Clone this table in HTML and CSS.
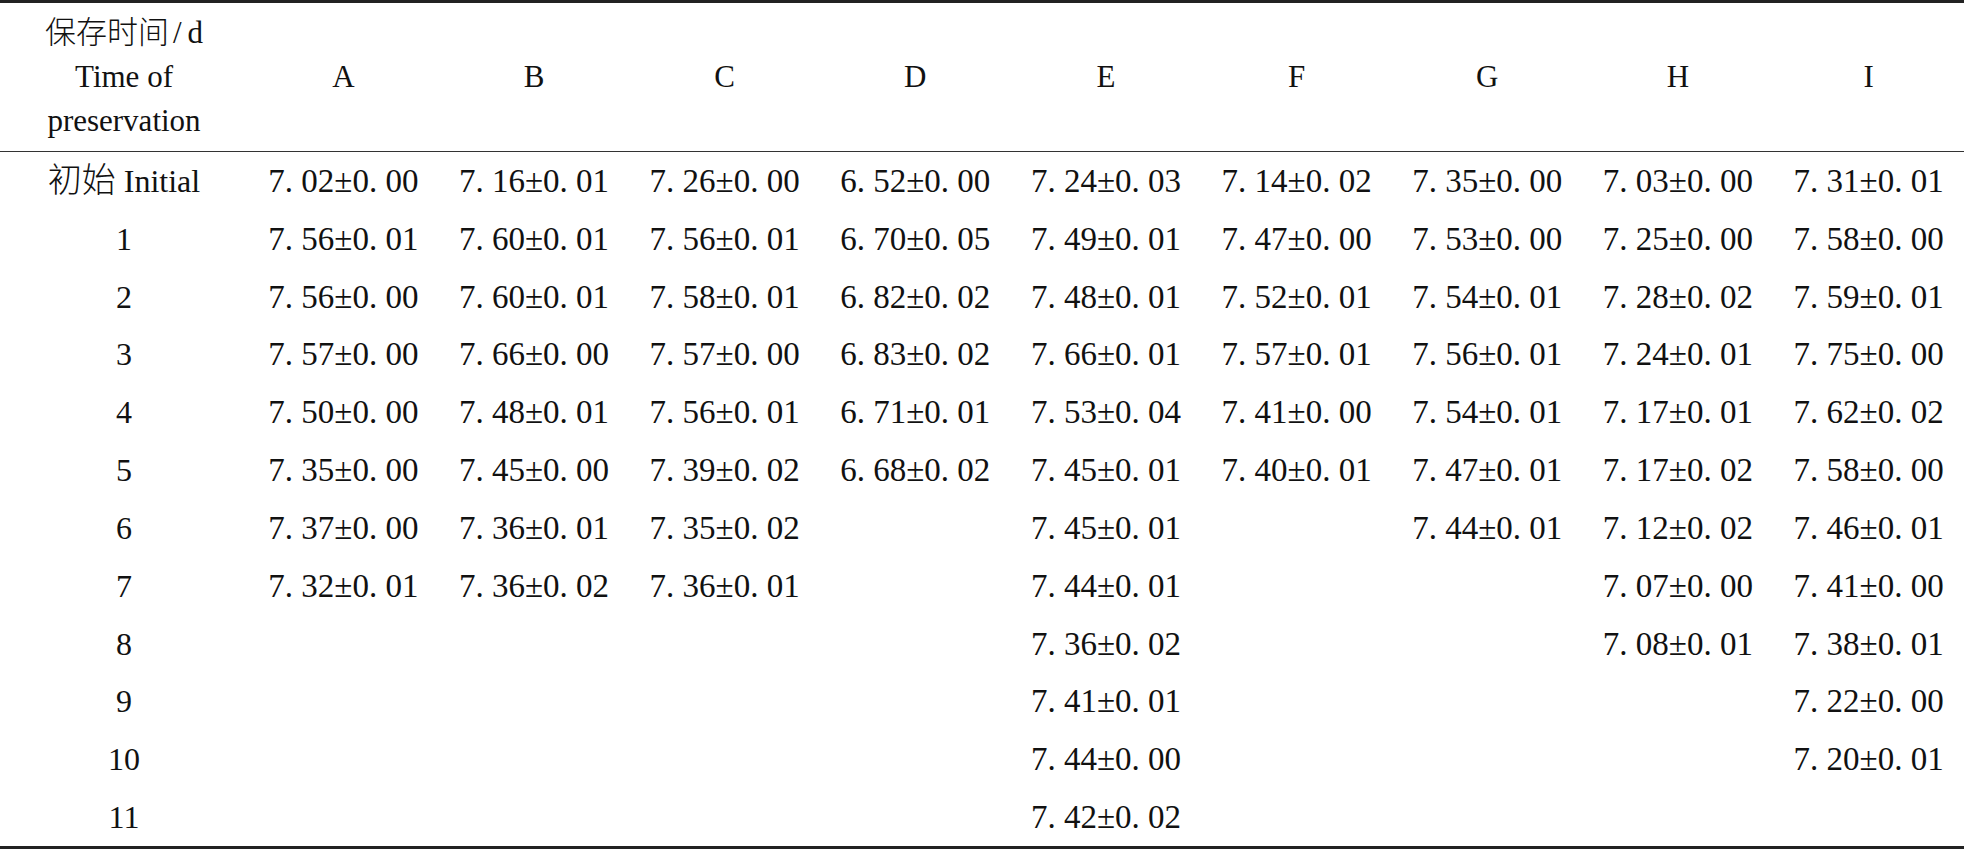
FILE: index.html
```html
<!DOCTYPE html>
<html lang="zh">
<head>
<meta charset="utf-8">
<link rel="stylesheet" href="styles.css">
</head>
<body>
<table class="data">
  <colgroup>
    <col class="c-first">
    <col class="c-val"><col class="c-val"><col class="c-val"><col class="c-val"><col class="c-val"><col class="c-val"><col class="c-val"><col class="c-val"><col class="c-val">
  </colgroup>
  <thead>
    <tr>
      <th class="hd-first"><span class="cjk">保存时间</span><span class="sl">/</span>d<br>Time of<br>preservation</th>
      <th>A</th><th>B</th><th>C</th><th>D</th><th>E</th><th>F</th><th>G</th><th>H</th><th>I</th>
    </tr>
  </thead>
  <tbody>
    <tr><td class="lbl"><span class="cjk-b">初始</span> Initial</td><td>7. 02±0. 00</td><td>7. 16±0. 01</td><td>7. 26±0. 00</td><td>6. 52±0. 00</td><td>7. 24±0. 03</td><td>7. 14±0. 02</td><td>7. 35±0. 00</td><td>7. 03±0. 00</td><td>7. 31±0. 01</td></tr>
    <tr><td class="lbl">1</td><td>7. 56±0. 01</td><td>7. 60±0. 01</td><td>7. 56±0. 01</td><td>6. 70±0. 05</td><td>7. 49±0. 01</td><td>7. 47±0. 00</td><td>7. 53±0. 00</td><td>7. 25±0. 00</td><td>7. 58±0. 00</td></tr>
    <tr><td class="lbl">2</td><td>7. 56±0. 00</td><td>7. 60±0. 01</td><td>7. 58±0. 01</td><td>6. 82±0. 02</td><td>7. 48±0. 01</td><td>7. 52±0. 01</td><td>7. 54±0. 01</td><td>7. 28±0. 02</td><td>7. 59±0. 01</td></tr>
    <tr><td class="lbl">3</td><td>7. 57±0. 00</td><td>7. 66±0. 00</td><td>7. 57±0. 00</td><td>6. 83±0. 02</td><td>7. 66±0. 01</td><td>7. 57±0. 01</td><td>7. 56±0. 01</td><td>7. 24±0. 01</td><td>7. 75±0. 00</td></tr>
    <tr><td class="lbl">4</td><td>7. 50±0. 00</td><td>7. 48±0. 01</td><td>7. 56±0. 01</td><td>6. 71±0. 01</td><td>7. 53±0. 04</td><td>7. 41±0. 00</td><td>7. 54±0. 01</td><td>7. 17±0. 01</td><td>7. 62±0. 02</td></tr>
    <tr><td class="lbl">5</td><td>7. 35±0. 00</td><td>7. 45±0. 00</td><td>7. 39±0. 02</td><td>6. 68±0. 02</td><td>7. 45±0. 01</td><td>7. 40±0. 01</td><td>7. 47±0. 01</td><td>7. 17±0. 02</td><td>7. 58±0. 00</td></tr>
    <tr><td class="lbl">6</td><td>7. 37±0. 00</td><td>7. 36±0. 01</td><td>7. 35±0. 02</td><td></td><td>7. 45±0. 01</td><td></td><td>7. 44±0. 01</td><td>7. 12±0. 02</td><td>7. 46±0. 01</td></tr>
    <tr><td class="lbl">7</td><td>7. 32±0. 01</td><td>7. 36±0. 02</td><td>7. 36±0. 01</td><td></td><td>7. 44±0. 01</td><td></td><td></td><td>7. 07±0. 00</td><td>7. 41±0. 00</td></tr>
    <tr><td class="lbl">8</td><td></td><td></td><td></td><td></td><td>7. 36±0. 02</td><td></td><td></td><td>7. 08±0. 01</td><td>7. 38±0. 01</td></tr>
    <tr><td class="lbl">9</td><td></td><td></td><td></td><td></td><td>7. 41±0. 01</td><td></td><td></td><td></td><td>7. 22±0. 00</td></tr>
    <tr><td class="lbl">10</td><td></td><td></td><td></td><td></td><td>7. 44±0. 00</td><td></td><td></td><td></td><td>7. 20±0. 01</td></tr>
    <tr><td class="lbl">11</td><td></td><td></td><td></td><td></td><td>7. 42±0. 02</td><td></td><td></td><td></td><td></td></tr>
  </tbody>
</table>
</body>
</html>
```
FILE: styles.css
```css
html, body {
  margin: 0;
  padding: 0;
  background: #ffffff;
}
body {
  font-family: "Liberation Serif", "Noto Sans CJK SC", serif;
  color: #111111;
}
.data {
  width: 1964px;
  border-collapse: collapse;
  table-layout: fixed;
  border-top: 3px solid #222222;
  border-bottom: 3px solid #222222;
}
.c-first { width: 248px; }
.c-val { width: 190.67px; }
.data th,
.data td {
  padding: 0;
  text-align: center;
  vertical-align: middle;
  font-weight: normal;
  white-space: nowrap;
}
.data thead th {
  height: 148px;
  font-size: 31px;
  line-height: 44px;
  border-bottom: 1px solid #333333;
}
.data tbody td {
  height: 57.83px;
  font-size: 33px;
  line-height: 34px;
}
.data tbody td.lbl {
  font-size: 32px;
}
.cjk {
  font-size: 31px;
  font-weight: 300;
}
.cjk-b {
  font-size: 34px;
  font-weight: 300;
}
.sl {
  margin: 0 6px 0 4px;
}
```
